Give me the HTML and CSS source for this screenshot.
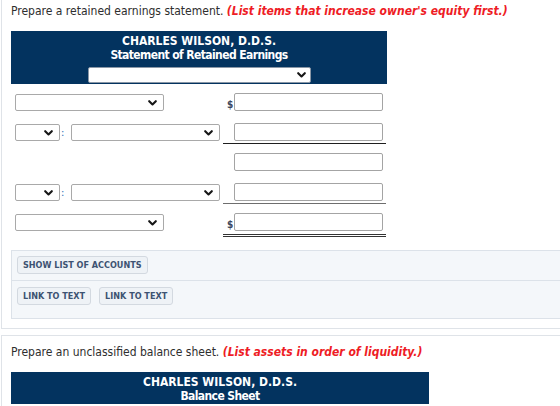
FILE: index.html
```html
<!DOCTYPE html>
<html lang="en">
<head>
<meta charset="utf-8">
<title>Retained earnings statement</title>
<link rel="stylesheet" href="styles.css">
</head>
<body>
<section class="card card-first">
  <p class="prompt">Prepare a retained earnings statement. <em class="hint">(List items that increase owner's equity first.)</em></p>

  <div class="sheet sheet-re">
    <div class="sheet-head">
      <div class="sheet-line">CHARLES WILSON, D.D.S.</div>
      <div class="sheet-line sheet-title">Statement of Retained Earnings</div>
      <div class="select select-period"><svg class="chev" viewBox="0 0 9 6" width="9" height="6"><path d="M1.2 1.2 L4.5 4.5 L7.8 1.2"/></svg></div>
    </div>
  </div>

  <div class="rows">
    <div class="row">
      <div class="lhs"><div class="select select-wide"><svg class="chev" viewBox="0 0 9 6" width="9" height="6"><path d="M1.2 1.2 L4.5 4.5 L7.8 1.2"/></svg></div></div>
      <div class="rhs"><span class="cur">$</span><div class="field"></div></div>
    </div>
    <div class="row">
      <div class="lhs">
        <div class="select select-small"><svg class="chev" viewBox="0 0 9 6" width="9" height="6"><path d="M1.2 1.2 L4.5 4.5 L7.8 1.2"/></svg></div>
        <span class="colon">:</span>
        <div class="select select-wide"><svg class="chev" viewBox="0 0 9 6" width="9" height="6"><path d="M1.2 1.2 L4.5 4.5 L7.8 1.2"/></svg></div>
      </div>
      <div class="rhs rule-single"><span class="cur"></span><div class="field"></div></div>
    </div>
    <div class="row">
      <div class="lhs"></div>
      <div class="rhs"><span class="cur"></span><div class="field"></div></div>
    </div>
    <div class="row">
      <div class="lhs">
        <div class="select select-small"><svg class="chev" viewBox="0 0 9 6" width="9" height="6"><path d="M1.2 1.2 L4.5 4.5 L7.8 1.2"/></svg></div>
        <span class="colon">:</span>
        <div class="select select-wide"><svg class="chev" viewBox="0 0 9 6" width="9" height="6"><path d="M1.2 1.2 L4.5 4.5 L7.8 1.2"/></svg></div>
      </div>
      <div class="rhs rule-grey"><span class="cur"></span><div class="field"></div></div>
    </div>
    <div class="row">
      <div class="lhs"><div class="select select-wide"><svg class="chev" viewBox="0 0 9 6" width="9" height="6"><path d="M1.2 1.2 L4.5 4.5 L7.8 1.2"/></svg></div></div>
      <div class="rhs rule-double"><span class="cur">$</span><div class="field"></div></div>
    </div>
  </div>

  <div class="tools">
    <div class="tool-row">
      <button class="btn" type="button">SHOW LIST OF ACCOUNTS</button>
    </div>
    <div class="tool-row">
      <button class="btn" type="button">LINK TO TEXT</button>
      <button class="btn" type="button">LINK TO TEXT</button>
    </div>
  </div>
</section>

<section class="card">
  <p class="prompt">Prepare an unclassified balance sheet. <em class="hint">(List assets in order of liquidity.)</em></p>
  <div class="sheet sheet-bs">
    <div class="sheet-head">
      <div class="sheet-line">CHARLES WILSON, D.D.S.</div>
      <div class="sheet-line sheet-title">Balance Sheet</div>
    </div>
  </div>
</section>
</body>
</html>
```

FILE: styles.css
```css
html, body {
  margin: 0;
  padding: 0;
  overflow: hidden;
  background: #fff;
}

body {
  font-family: "DejaVu Sans Condensed", "DejaVu Sans", sans-serif;
  font-stretch: condensed;
  font-size: 12px;
  color: #2e2e2e;
}

/* question cards */
.card {
  width: 640px;
  margin-left: 1px;
  border: 1px solid #dfe3e8;
  padding: 8px 9px 9px 9px;
  background: #fff;
}

.card-first {
  margin-top: -6px;
  margin-bottom: 6px;
}

.prompt {
  margin: 0;
  line-height: 16px;
}

.hint {
  color: #ee1c25;
  font-weight: bold;
  font-style: italic;
}

/* statement heading block */
.sheet {
  margin-top: 12px;
}

.sheet-re { width: 376px; }
.sheet-bs { width: 418px; }

.sheet-head {
  background: #03335f;
  color: #fff;
  font-weight: bold;
  text-align: center;
  line-height: 14px;
  padding: 3px 0 1px;
  display: flex;
  flex-direction: column;
  align-items: center;
}

.sheet-title {
  letter-spacing: -0.6px;
}

/* dropdown look-alikes */
.select {
  box-sizing: border-box;
  height: 17px;
  background: #fff;
  border: 1px solid #a9a9a9;
  border-radius: 2px;
  display: flex;
  align-items: center;
  justify-content: flex-end;
  padding-right: 6px;
}

.chev {
  display: block;
  fill: none;
  stroke: #161616;
  stroke-width: 2.1;
  stroke-linecap: round;
  stroke-linejoin: round;
}

.select-period {
  width: 223px;
  height: 16px;
  margin-top: 5px;
  border-color: #8a97a6;
  padding-right: 4px;
}

.select-wide { width: 149px; }
.select-small { width: 45px; }

/* statement lines */
.rows {
  display: grid;
  grid-auto-rows: 30px;
  margin: 9px 0 7px 4px;
}

.row {
  display: grid;
  grid-template-columns: 208px 163px;
  align-items: start;
}

.lhs {
  display: flex;
  align-items: center;
  margin-top: 1px;
}

.colon {
  width: 11px;
  padding-left: 1px;
  box-sizing: border-box;
  color: #2f6db5;
  font-size: 11px;
  line-height: 17px;
  align-self: flex-end;
}

.rhs {
  display: flex;
  align-items: flex-end;
}

.cur {
  width: 11px;
  box-sizing: border-box;
  padding-left: 4px;
  color: #3a4660;
  font-size: 10px;
  font-weight: bold;
  line-height: 12px;
}

.field {
  box-sizing: border-box;
  width: 149px;
  height: 18px;
  border: 1px solid #a4a4a4;
  border-radius: 2px;
  background: #fff;
}

.rule-single {
  padding-bottom: 2px;
  border-bottom: 1px solid #1e1e1e;
}

.rule-grey {
  padding-bottom: 2px;
  border-bottom: 1px solid #6e6e6e;
}

.rule-double {
  padding-bottom: 3px;
  border-bottom: 3px double #333;
}

/* helper buttons panel */
.tools {
  background: #f4f7fa;
  border: 1px solid #dce2e9;
}

.tool-row {
  display: flex;
  gap: 8px;
  padding: 5px 5px 6px;
}

.tool-row + .tool-row {
  border-top: 1px solid #dce2e9;
  padding-top: 6px;
  padding-bottom: 13px;
}

.btn {
  box-sizing: border-box;
  height: 18px;
  padding: 0 5px;
  margin: 0;
  font-family: inherit;
  font-stretch: condensed;
  font-size: 9px;
  font-weight: bold;
  color: #3d5372;
  background: #eef2f6;
  border: 1px solid #d3d9e0;
  border-radius: 3px;
  line-height: 16px;
}
```
